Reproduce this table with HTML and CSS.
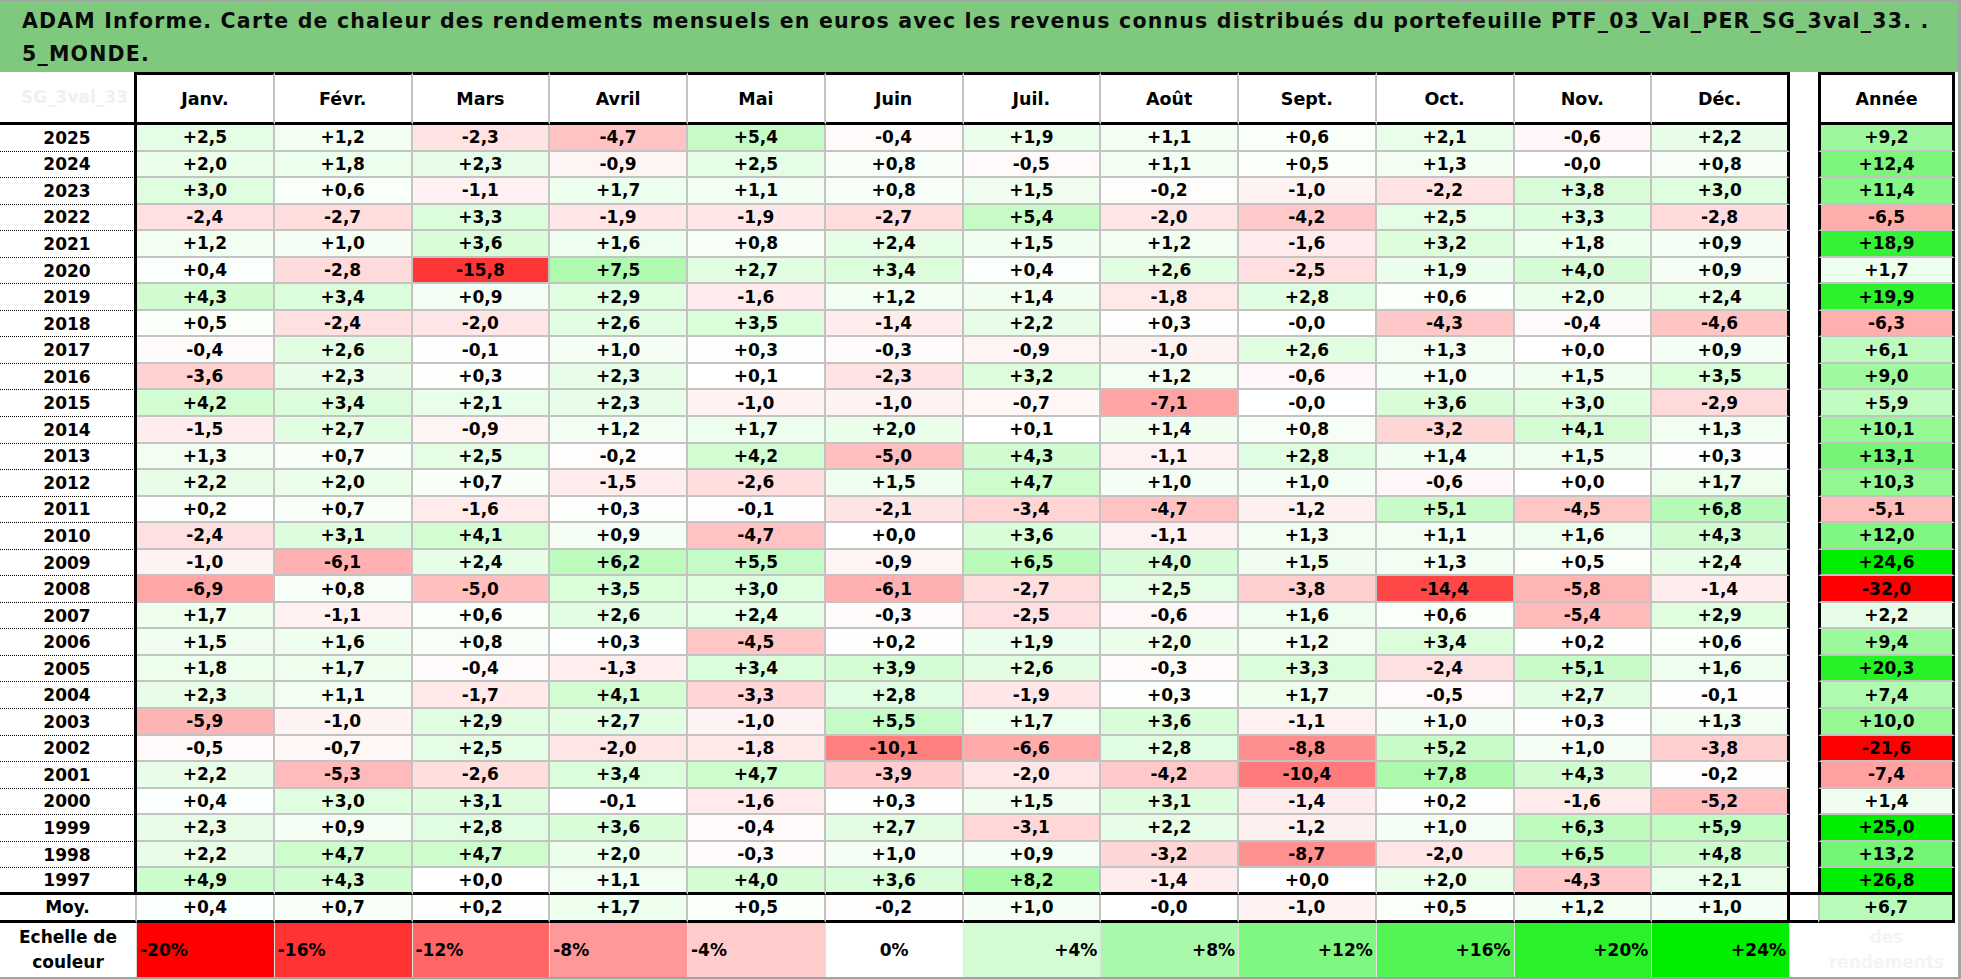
FILE: index.html
```html
<!DOCTYPE html>
<html lang="fr">
<head>
<meta charset="utf-8">
<title>ADAM Informe - Carte de chaleur</title>
<link rel="stylesheet" href="styles.css">
</head>
<body>
<div class="sheet">
  <div class="title">ADAM Informe. Carte de chaleur des rendements mensuels en euros avec les revenus connus distribués du portefeuille PTF_03_Val_PER_SG_3val_33. .<br>5_MONDE.</div>

  <div class="row head">
    <div class="yr ghost">SG_3val_33</div>
    <div class="m">Janv.</div><div class="m">Févr.</div><div class="m">Mars</div><div class="m">Avril</div><div class="m">Mai</div><div class="m">Juin</div><div class="m">Juil.</div><div class="m">Août</div><div class="m">Sept.</div><div class="m">Oct.</div><div class="m">Nov.</div><div class="m dec">Déc.</div>
    <div class="gap"></div>
    <div class="an">Année</div>
  </div>

  <div class="row data"><div class="yr">2025</div><div class="c">+2,5</div><div class="c">+1,2</div><div class="c">-2,3</div><div class="c">-4,7</div><div class="c">+5,4</div><div class="c">-0,4</div><div class="c">+1,9</div><div class="c">+1,1</div><div class="c">+0,6</div><div class="c">+2,1</div><div class="c">-0,6</div><div class="c dec">+2,2</div><div class="gap"></div><div class="c an">+9,2</div></div>
  <div class="row data"><div class="yr">2024</div><div class="c">+2,0</div><div class="c">+1,8</div><div class="c">+2,3</div><div class="c">-0,9</div><div class="c">+2,5</div><div class="c">+0,8</div><div class="c">-0,5</div><div class="c">+1,1</div><div class="c">+0,5</div><div class="c">+1,3</div><div class="c">-0,0</div><div class="c dec">+0,8</div><div class="gap"></div><div class="c an">+12,4</div></div>
  <div class="row data"><div class="yr">2023</div><div class="c">+3,0</div><div class="c">+0,6</div><div class="c">-1,1</div><div class="c">+1,7</div><div class="c">+1,1</div><div class="c">+0,8</div><div class="c">+1,5</div><div class="c">-0,2</div><div class="c">-1,0</div><div class="c">-2,2</div><div class="c">+3,8</div><div class="c dec">+3,0</div><div class="gap"></div><div class="c an">+11,4</div></div>
  <div class="row data"><div class="yr">2022</div><div class="c">-2,4</div><div class="c">-2,7</div><div class="c">+3,3</div><div class="c">-1,9</div><div class="c">-1,9</div><div class="c">-2,7</div><div class="c">+5,4</div><div class="c">-2,0</div><div class="c">-4,2</div><div class="c">+2,5</div><div class="c">+3,3</div><div class="c dec">-2,8</div><div class="gap"></div><div class="c an">-6,5</div></div>
  <div class="row data"><div class="yr">2021</div><div class="c">+1,2</div><div class="c">+1,0</div><div class="c">+3,6</div><div class="c">+1,6</div><div class="c">+0,8</div><div class="c">+2,4</div><div class="c">+1,5</div><div class="c">+1,2</div><div class="c">-1,6</div><div class="c">+3,2</div><div class="c">+1,8</div><div class="c dec">+0,9</div><div class="gap"></div><div class="c an">+18,9</div></div>
  <div class="row data"><div class="yr">2020</div><div class="c">+0,4</div><div class="c">-2,8</div><div class="c">-15,8</div><div class="c">+7,5</div><div class="c">+2,7</div><div class="c">+3,4</div><div class="c">+0,4</div><div class="c">+2,6</div><div class="c">-2,5</div><div class="c">+1,9</div><div class="c">+4,0</div><div class="c dec">+0,9</div><div class="gap"></div><div class="c an">+1,7</div></div>
  <div class="row data"><div class="yr">2019</div><div class="c">+4,3</div><div class="c">+3,4</div><div class="c">+0,9</div><div class="c">+2,9</div><div class="c">-1,6</div><div class="c">+1,2</div><div class="c">+1,4</div><div class="c">-1,8</div><div class="c">+2,8</div><div class="c">+0,6</div><div class="c">+2,0</div><div class="c dec">+2,4</div><div class="gap"></div><div class="c an">+19,9</div></div>
  <div class="row data"><div class="yr">2018</div><div class="c">+0,5</div><div class="c">-2,4</div><div class="c">-2,0</div><div class="c">+2,6</div><div class="c">+3,5</div><div class="c">-1,4</div><div class="c">+2,2</div><div class="c">+0,3</div><div class="c">-0,0</div><div class="c">-4,3</div><div class="c">-0,4</div><div class="c dec">-4,6</div><div class="gap"></div><div class="c an">-6,3</div></div>
  <div class="row data"><div class="yr">2017</div><div class="c">-0,4</div><div class="c">+2,6</div><div class="c">-0,1</div><div class="c">+1,0</div><div class="c">+0,3</div><div class="c">-0,3</div><div class="c">-0,9</div><div class="c">-1,0</div><div class="c">+2,6</div><div class="c">+1,3</div><div class="c">+0,0</div><div class="c dec">+0,9</div><div class="gap"></div><div class="c an">+6,1</div></div>
  <div class="row data"><div class="yr">2016</div><div class="c">-3,6</div><div class="c">+2,3</div><div class="c">+0,3</div><div class="c">+2,3</div><div class="c">+0,1</div><div class="c">-2,3</div><div class="c">+3,2</div><div class="c">+1,2</div><div class="c">-0,6</div><div class="c">+1,0</div><div class="c">+1,5</div><div class="c dec">+3,5</div><div class="gap"></div><div class="c an">+9,0</div></div>
  <div class="row data"><div class="yr">2015</div><div class="c">+4,2</div><div class="c">+3,4</div><div class="c">+2,1</div><div class="c">+2,3</div><div class="c">-1,0</div><div class="c">-1,0</div><div class="c">-0,7</div><div class="c">-7,1</div><div class="c">-0,0</div><div class="c">+3,6</div><div class="c">+3,0</div><div class="c dec">-2,9</div><div class="gap"></div><div class="c an">+5,9</div></div>
  <div class="row data"><div class="yr">2014</div><div class="c">-1,5</div><div class="c">+2,7</div><div class="c">-0,9</div><div class="c">+1,2</div><div class="c">+1,7</div><div class="c">+2,0</div><div class="c">+0,1</div><div class="c">+1,4</div><div class="c">+0,8</div><div class="c">-3,2</div><div class="c">+4,1</div><div class="c dec">+1,3</div><div class="gap"></div><div class="c an">+10,1</div></div>
  <div class="row data"><div class="yr">2013</div><div class="c">+1,3</div><div class="c">+0,7</div><div class="c">+2,5</div><div class="c">-0,2</div><div class="c">+4,2</div><div class="c">-5,0</div><div class="c">+4,3</div><div class="c">-1,1</div><div class="c">+2,8</div><div class="c">+1,4</div><div class="c">+1,5</div><div class="c dec">+0,3</div><div class="gap"></div><div class="c an">+13,1</div></div>
  <div class="row data"><div class="yr">2012</div><div class="c">+2,2</div><div class="c">+2,0</div><div class="c">+0,7</div><div class="c">-1,5</div><div class="c">-2,6</div><div class="c">+1,5</div><div class="c">+4,7</div><div class="c">+1,0</div><div class="c">+1,0</div><div class="c">-0,6</div><div class="c">+0,0</div><div class="c dec">+1,7</div><div class="gap"></div><div class="c an">+10,3</div></div>
  <div class="row data"><div class="yr">2011</div><div class="c">+0,2</div><div class="c">+0,7</div><div class="c">-1,6</div><div class="c">+0,3</div><div class="c">-0,1</div><div class="c">-2,1</div><div class="c">-3,4</div><div class="c">-4,7</div><div class="c">-1,2</div><div class="c">+5,1</div><div class="c">-4,5</div><div class="c dec">+6,8</div><div class="gap"></div><div class="c an">-5,1</div></div>
  <div class="row data"><div class="yr">2010</div><div class="c">-2,4</div><div class="c">+3,1</div><div class="c">+4,1</div><div class="c">+0,9</div><div class="c">-4,7</div><div class="c">+0,0</div><div class="c">+3,6</div><div class="c">-1,1</div><div class="c">+1,3</div><div class="c">+1,1</div><div class="c">+1,6</div><div class="c dec">+4,3</div><div class="gap"></div><div class="c an">+12,0</div></div>
  <div class="row data"><div class="yr">2009</div><div class="c">-1,0</div><div class="c">-6,1</div><div class="c">+2,4</div><div class="c">+6,2</div><div class="c">+5,5</div><div class="c">-0,9</div><div class="c">+6,5</div><div class="c">+4,0</div><div class="c">+1,5</div><div class="c">+1,3</div><div class="c">+0,5</div><div class="c dec">+2,4</div><div class="gap"></div><div class="c an">+24,6</div></div>
  <div class="row data"><div class="yr">2008</div><div class="c">-6,9</div><div class="c">+0,8</div><div class="c">-5,0</div><div class="c">+3,5</div><div class="c">+3,0</div><div class="c">-6,1</div><div class="c">-2,7</div><div class="c">+2,5</div><div class="c">-3,8</div><div class="c">-14,4</div><div class="c">-5,8</div><div class="c dec">-1,4</div><div class="gap"></div><div class="c an">-32,0</div></div>
  <div class="row data"><div class="yr">2007</div><div class="c">+1,7</div><div class="c">-1,1</div><div class="c">+0,6</div><div class="c">+2,6</div><div class="c">+2,4</div><div class="c">-0,3</div><div class="c">-2,5</div><div class="c">-0,6</div><div class="c">+1,6</div><div class="c">+0,6</div><div class="c">-5,4</div><div class="c dec">+2,9</div><div class="gap"></div><div class="c an">+2,2</div></div>
  <div class="row data"><div class="yr">2006</div><div class="c">+1,5</div><div class="c">+1,6</div><div class="c">+0,8</div><div class="c">+0,3</div><div class="c">-4,5</div><div class="c">+0,2</div><div class="c">+1,9</div><div class="c">+2,0</div><div class="c">+1,2</div><div class="c">+3,4</div><div class="c">+0,2</div><div class="c dec">+0,6</div><div class="gap"></div><div class="c an">+9,4</div></div>
  <div class="row data"><div class="yr">2005</div><div class="c">+1,8</div><div class="c">+1,7</div><div class="c">-0,4</div><div class="c">-1,3</div><div class="c">+3,4</div><div class="c">+3,9</div><div class="c">+2,6</div><div class="c">-0,3</div><div class="c">+3,3</div><div class="c">-2,4</div><div class="c">+5,1</div><div class="c dec">+1,6</div><div class="gap"></div><div class="c an">+20,3</div></div>
  <div class="row data"><div class="yr">2004</div><div class="c">+2,3</div><div class="c">+1,1</div><div class="c">-1,7</div><div class="c">+4,1</div><div class="c">-3,3</div><div class="c">+2,8</div><div class="c">-1,9</div><div class="c">+0,3</div><div class="c">+1,7</div><div class="c">-0,5</div><div class="c">+2,7</div><div class="c dec">-0,1</div><div class="gap"></div><div class="c an">+7,4</div></div>
  <div class="row data"><div class="yr">2003</div><div class="c">-5,9</div><div class="c">-1,0</div><div class="c">+2,9</div><div class="c">+2,7</div><div class="c">-1,0</div><div class="c">+5,5</div><div class="c">+1,7</div><div class="c">+3,6</div><div class="c">-1,1</div><div class="c">+1,0</div><div class="c">+0,3</div><div class="c dec">+1,3</div><div class="gap"></div><div class="c an">+10,0</div></div>
  <div class="row data"><div class="yr">2002</div><div class="c">-0,5</div><div class="c">-0,7</div><div class="c">+2,5</div><div class="c">-2,0</div><div class="c">-1,8</div><div class="c">-10,1</div><div class="c">-6,6</div><div class="c">+2,8</div><div class="c">-8,8</div><div class="c">+5,2</div><div class="c">+1,0</div><div class="c dec">-3,8</div><div class="gap"></div><div class="c an">-21,6</div></div>
  <div class="row data"><div class="yr">2001</div><div class="c">+2,2</div><div class="c">-5,3</div><div class="c">-2,6</div><div class="c">+3,4</div><div class="c">+4,7</div><div class="c">-3,9</div><div class="c">-2,0</div><div class="c">-4,2</div><div class="c">-10,4</div><div class="c">+7,8</div><div class="c">+4,3</div><div class="c dec">-0,2</div><div class="gap"></div><div class="c an">-7,4</div></div>
  <div class="row data"><div class="yr">2000</div><div class="c">+0,4</div><div class="c">+3,0</div><div class="c">+3,1</div><div class="c">-0,1</div><div class="c">-1,6</div><div class="c">+0,3</div><div class="c">+1,5</div><div class="c">+3,1</div><div class="c">-1,4</div><div class="c">+0,2</div><div class="c">-1,6</div><div class="c dec">-5,2</div><div class="gap"></div><div class="c an">+1,4</div></div>
  <div class="row data"><div class="yr">1999</div><div class="c">+2,3</div><div class="c">+0,9</div><div class="c">+2,8</div><div class="c">+3,6</div><div class="c">-0,4</div><div class="c">+2,7</div><div class="c">-3,1</div><div class="c">+2,2</div><div class="c">-1,2</div><div class="c">+1,0</div><div class="c">+6,3</div><div class="c dec">+5,9</div><div class="gap"></div><div class="c an">+25,0</div></div>
  <div class="row data"><div class="yr">1998</div><div class="c">+2,2</div><div class="c">+4,7</div><div class="c">+4,7</div><div class="c">+2,0</div><div class="c">-0,3</div><div class="c">+1,0</div><div class="c">+0,9</div><div class="c">-3,2</div><div class="c">-8,7</div><div class="c">-2,0</div><div class="c">+6,5</div><div class="c dec">+4,8</div><div class="gap"></div><div class="c an">+13,2</div></div>
  <div class="row data last"><div class="yr">1997</div><div class="c">+4,9</div><div class="c">+4,3</div><div class="c">+0,0</div><div class="c">+1,1</div><div class="c">+4,0</div><div class="c">+3,6</div><div class="c">+8,2</div><div class="c">-1,4</div><div class="c">+0,0</div><div class="c">+2,0</div><div class="c">-4,3</div><div class="c dec">+2,1</div><div class="gap"></div><div class="c an">+26,8</div></div>

  <div class="row moy"><div class="yr">Moy.</div><div class="c">+0,4</div><div class="c">+0,7</div><div class="c">+0,2</div><div class="c">+1,7</div><div class="c">+0,5</div><div class="c">-0,2</div><div class="c">+1,0</div><div class="c">-0,0</div><div class="c">-1,0</div><div class="c">+0,5</div><div class="c">+1,2</div><div class="c dec">+1,0</div><div class="gap"></div><div class="c an">+6,7</div></div>

  <div class="row scale">
    <div class="yr"><span>Echelle de</span><span>couleur</span></div>
    <div class="s neg k1">-20%</div>
    <div class="s neg k2">-16%</div>
    <div class="s neg k3">-12%</div>
    <div class="s neg k4">-8%</div>
    <div class="s neg k5">-4%</div>
    <div class="s zero k6">0%</div>
    <div class="s pos k7">+4%</div>
    <div class="s pos k8">+8%</div>
    <div class="s pos k9">+12%</div>
    <div class="s pos k10">+16%</div>
    <div class="s pos k11">+20%</div>
    <div class="s pos k12">+24%</div>
    <div class="gap"></div>
    <div class="note"><span>des</span><span>rendements</span></div>
  </div>
</div>
<script src="script.js"></script>
</body>
</html>
```

FILE: styles.css
```css
html, body {
  margin: 0;
  padding: 0;
  background: #ffffff;
}

body {
  font-family: "DejaVu Sans", "Liberation Sans", sans-serif;
  font-weight: bold;
  color: #000000;
}

.sheet {
  width: 1958px;
  height: 976px;
  border-top: 1px solid #a3a3a3;
  border-right: 3px solid #a3a3a3;
  border-bottom: 2px solid #a3a3a3;
  overflow: hidden;
}

.title {
  box-sizing: border-box;
  height: 71px;
  background: #7fc97f;
  padding: 4px 0 0 22px;
  font-size: 20.5px;
  line-height: 33px;
  letter-spacing: 1.2px;
  white-space: nowrap;
  color: #0a0a0a;
}

.row {
  display: grid;
  grid-template-columns: 137px repeat(12, 137.75px) 28px 137px;
}

.row > div {
  box-sizing: border-box;
  display: flex;
  align-items: center;
  justify-content: center;
  font-size: 17px;
  white-space: nowrap;
  overflow: hidden;
}

.head { height: 53px; }
.data { height: 26.55px; }
.moy { height: 28px; }
.scale { height: 54px; }

.row.head > div { font-size: 17.5px; }

/* year column */
.yr {
  background: #ffffff;
  border-right: 3px solid #000000;
  border-bottom: 1px dotted #000000;
}

.row.head .yr {
  border-bottom: 3px solid #000000;
}

.row.head .ghost {
  color: #eef2ee;
  justify-content: flex-end;
  padding-right: 6px;
  font-size: 17px;
}

/* header months */
.m {
  background: #ffffff;
  border-top: 3px solid #000000;
  border-bottom: 3px solid #000000;
  border-right: 2px solid #c3c3c3;
}

/* data cells */
.c {
  background: #ffffff;
  border-right: 2px solid #c3c3c3;
  border-bottom: 2px solid #c3c3c3;
}

.row .dec {
  border-right: 3px solid #000000;
}

.gap {
  background: #ffffff;
}

.row .an {
  background: #ffffff;
  border-left: 3px solid #000000;
  border-right: 3px solid #000000;
  border-bottom: 2px solid #c3c3c3;
}

.row.head .an {
  border-top: 3px solid #000000;
  border-bottom: 3px solid #000000;
}

.row.last > div {
  border-bottom: 3px solid #000000;
}

.row.moy > div {
  border-bottom: 3px solid #000000;
}

.row.moy .yr {
  border-right: 2px solid #c3c3c3;
}

.row.moy .an {
  border-left: 2px solid #c3c3c3;
}

/* colour scale row */
.row.scale .yr {
  flex-direction: column;
  line-height: 25px;
  border-right: 1px solid #d6d6d6;
  border-bottom: none;
}

.s {
  border-right: 1px solid #e2e2e2;
}

.row.scale .neg { justify-content: flex-start; padding-left: 3px; }
.row.scale .pos { justify-content: flex-end; padding-right: 3px; }

.k1 { background: #ff0000; }
.k2 { background: #ff3333; }
.k3 { background: #ff6666; }
.k4 { background: #ff9999; }
.k5 { background: #ffcccc; }
.k6 { background: #ffffff; }
.k7 { background: #d4fcd4; }
.k8 { background: #aaf9aa; }
.k9 { background: #80f780; }
.k10 { background: #55f455; }
.k11 { background: #2bf12b; }
.k12 { background: #00ee00; }

.row.scale .note {
  flex-direction: column;
  line-height: 25px;
  color: #f3f5f3;
  background: #ffffff;
}
```

FILE: script.js
```js
document.querySelectorAll('.c').forEach(function (el) {
  var v = parseFloat(el.textContent.replace(',', '.'));
  if (isNaN(v)) { return; }
  var r, g, b, t;
  if (v < 0) {
    t = Math.min(1, -v / 20);
    r = 255;
    g = b = Math.round(255 * (1 - t));
  } else {
    t = Math.min(1, v / 24);
    r = b = Math.round(255 * (1 - t));
    g = Math.round(255 - 17 * t);
  }
  el.style.backgroundColor = 'rgb(' + r + ',' + g + ',' + b + ')';
});
```
